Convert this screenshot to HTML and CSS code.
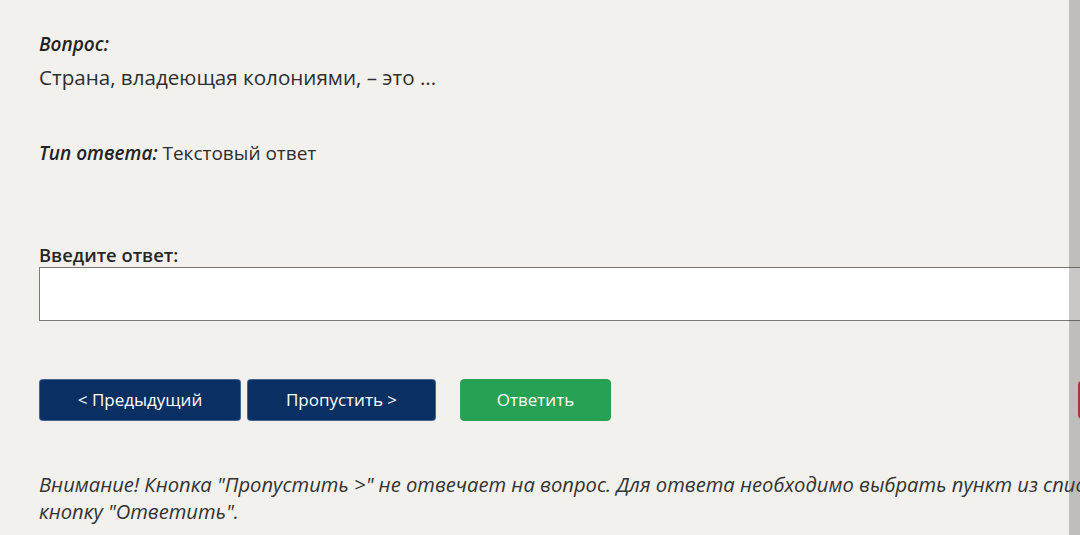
FILE: index.html
```html
<!DOCTYPE html>
<html lang="ru">
<head>
<meta charset="utf-8">
<link rel="stylesheet" href="styles.css">
</head>
<body>
<div class="page">
  <div class="q-label">Вопрос:</div>
  <div class="q-text">Страна, владеющая колониями, – это ...</div>
  <div class="type"><span class="type-label">Тип ответа:</span> Текстовый ответ</div>
  <label class="answer-label" for="ans">Введите ответ:</label>
  <input id="ans" class="answer" type="text">
  <div class="buttons">
    <button class="btn btn-nav">&lt; Предыдущий</button>
    <button class="btn btn-nav btn-skip">Пропустить &gt;</button>
    <button class="btn btn-ok">Ответить</button>
    <span class="btn-end" aria-hidden="true"></span>
  </div>
  <div class="warning">Внимание! Кнопка "Пропустить &gt;" не отвечает на вопрос. Для ответа необходимо выбрать пункт из списка и нажать кнопку "Ответить".</div>
</div>
<div class="side-shade"></div>
</body>
</html>
```
FILE: styles.css
```css
html, body {
  margin: 0;
  padding: 0;
  overflow: hidden;
  background: #f2f1ee;
}
body {
  font-family: "Open Sans", "Noto Sans", sans-serif;
  color: #2e2e2e;
  height: 535px;
}
.page {
  width: 1300px;
  padding: 31px 0 0 39px;
  box-sizing: border-box;
}
.q-label {
  font-style: italic;
  font-weight: 600;
  font-size: 19px;
  line-height: 27px;
  color: #222;
}
.q-text {
  margin-top: 6px;
  font-size: 20.6px;
  line-height: 27px;
}
.type {
  margin-top: 49px;
  font-size: 19px;
  line-height: 27px;
}
.type-label {
  font-style: italic;
  font-weight: 600;
  color: #222;
}
.answer-label {
  display: block;
  margin-top: 76px;
  font-size: 18.4px;
  line-height: 24px;
  font-weight: 600;
  color: #262626;
}
.answer {
  display: block;
  width: 1130px;
  height: 54px;
  box-sizing: border-box;
  border: 1px solid #7a7a7a;
  background: #fff;
  margin: 0;
  padding: 0 10px;
  font-size: 18px;
  font-family: inherit;
}
.buttons {
  display: flex;
  margin-top: 58px;
  height: 41px;
}
.btn {
  flex-shrink: 0;
  height: 42px;
  border: 1px solid rgba(180, 200, 230, 0.35);
  border-radius: 4px;
  color: #fff;
  font-family: "Open Sans", "Noto Sans", sans-serif;
  font-size: 17px;
  padding: 0 0 2px;
  cursor: pointer;
}
.btn-nav {
  background: #0a2f63;
  width: 202px;
}
.btn-skip {
  width: 189px;
  margin-left: 6px;
}
.btn-ok {
  background: #27a153;
  border-color: #2aa356;
  width: 151px;
  margin-left: 24px;
}
.btn-end {
  flex-shrink: 0;
  box-sizing: border-box;
  height: 38px;
  margin-top: 2px;
  width: 150px;
  margin-left: 467px;
  border: 2px solid #c0394a;
  border-radius: 4px;
  background: #f2f1ee;
}
.warning {
  margin-top: 51px;
  font-style: italic;
  font-size: 20.2px;
  line-height: 27px;
  color: #333;
  width: 1200px;
}
.side-shade {
  position: fixed;
  top: 0;
  right: 0;
  width: 11px;
  height: 100%;
  background: rgba(60, 58, 55, 0.28);
}
```
